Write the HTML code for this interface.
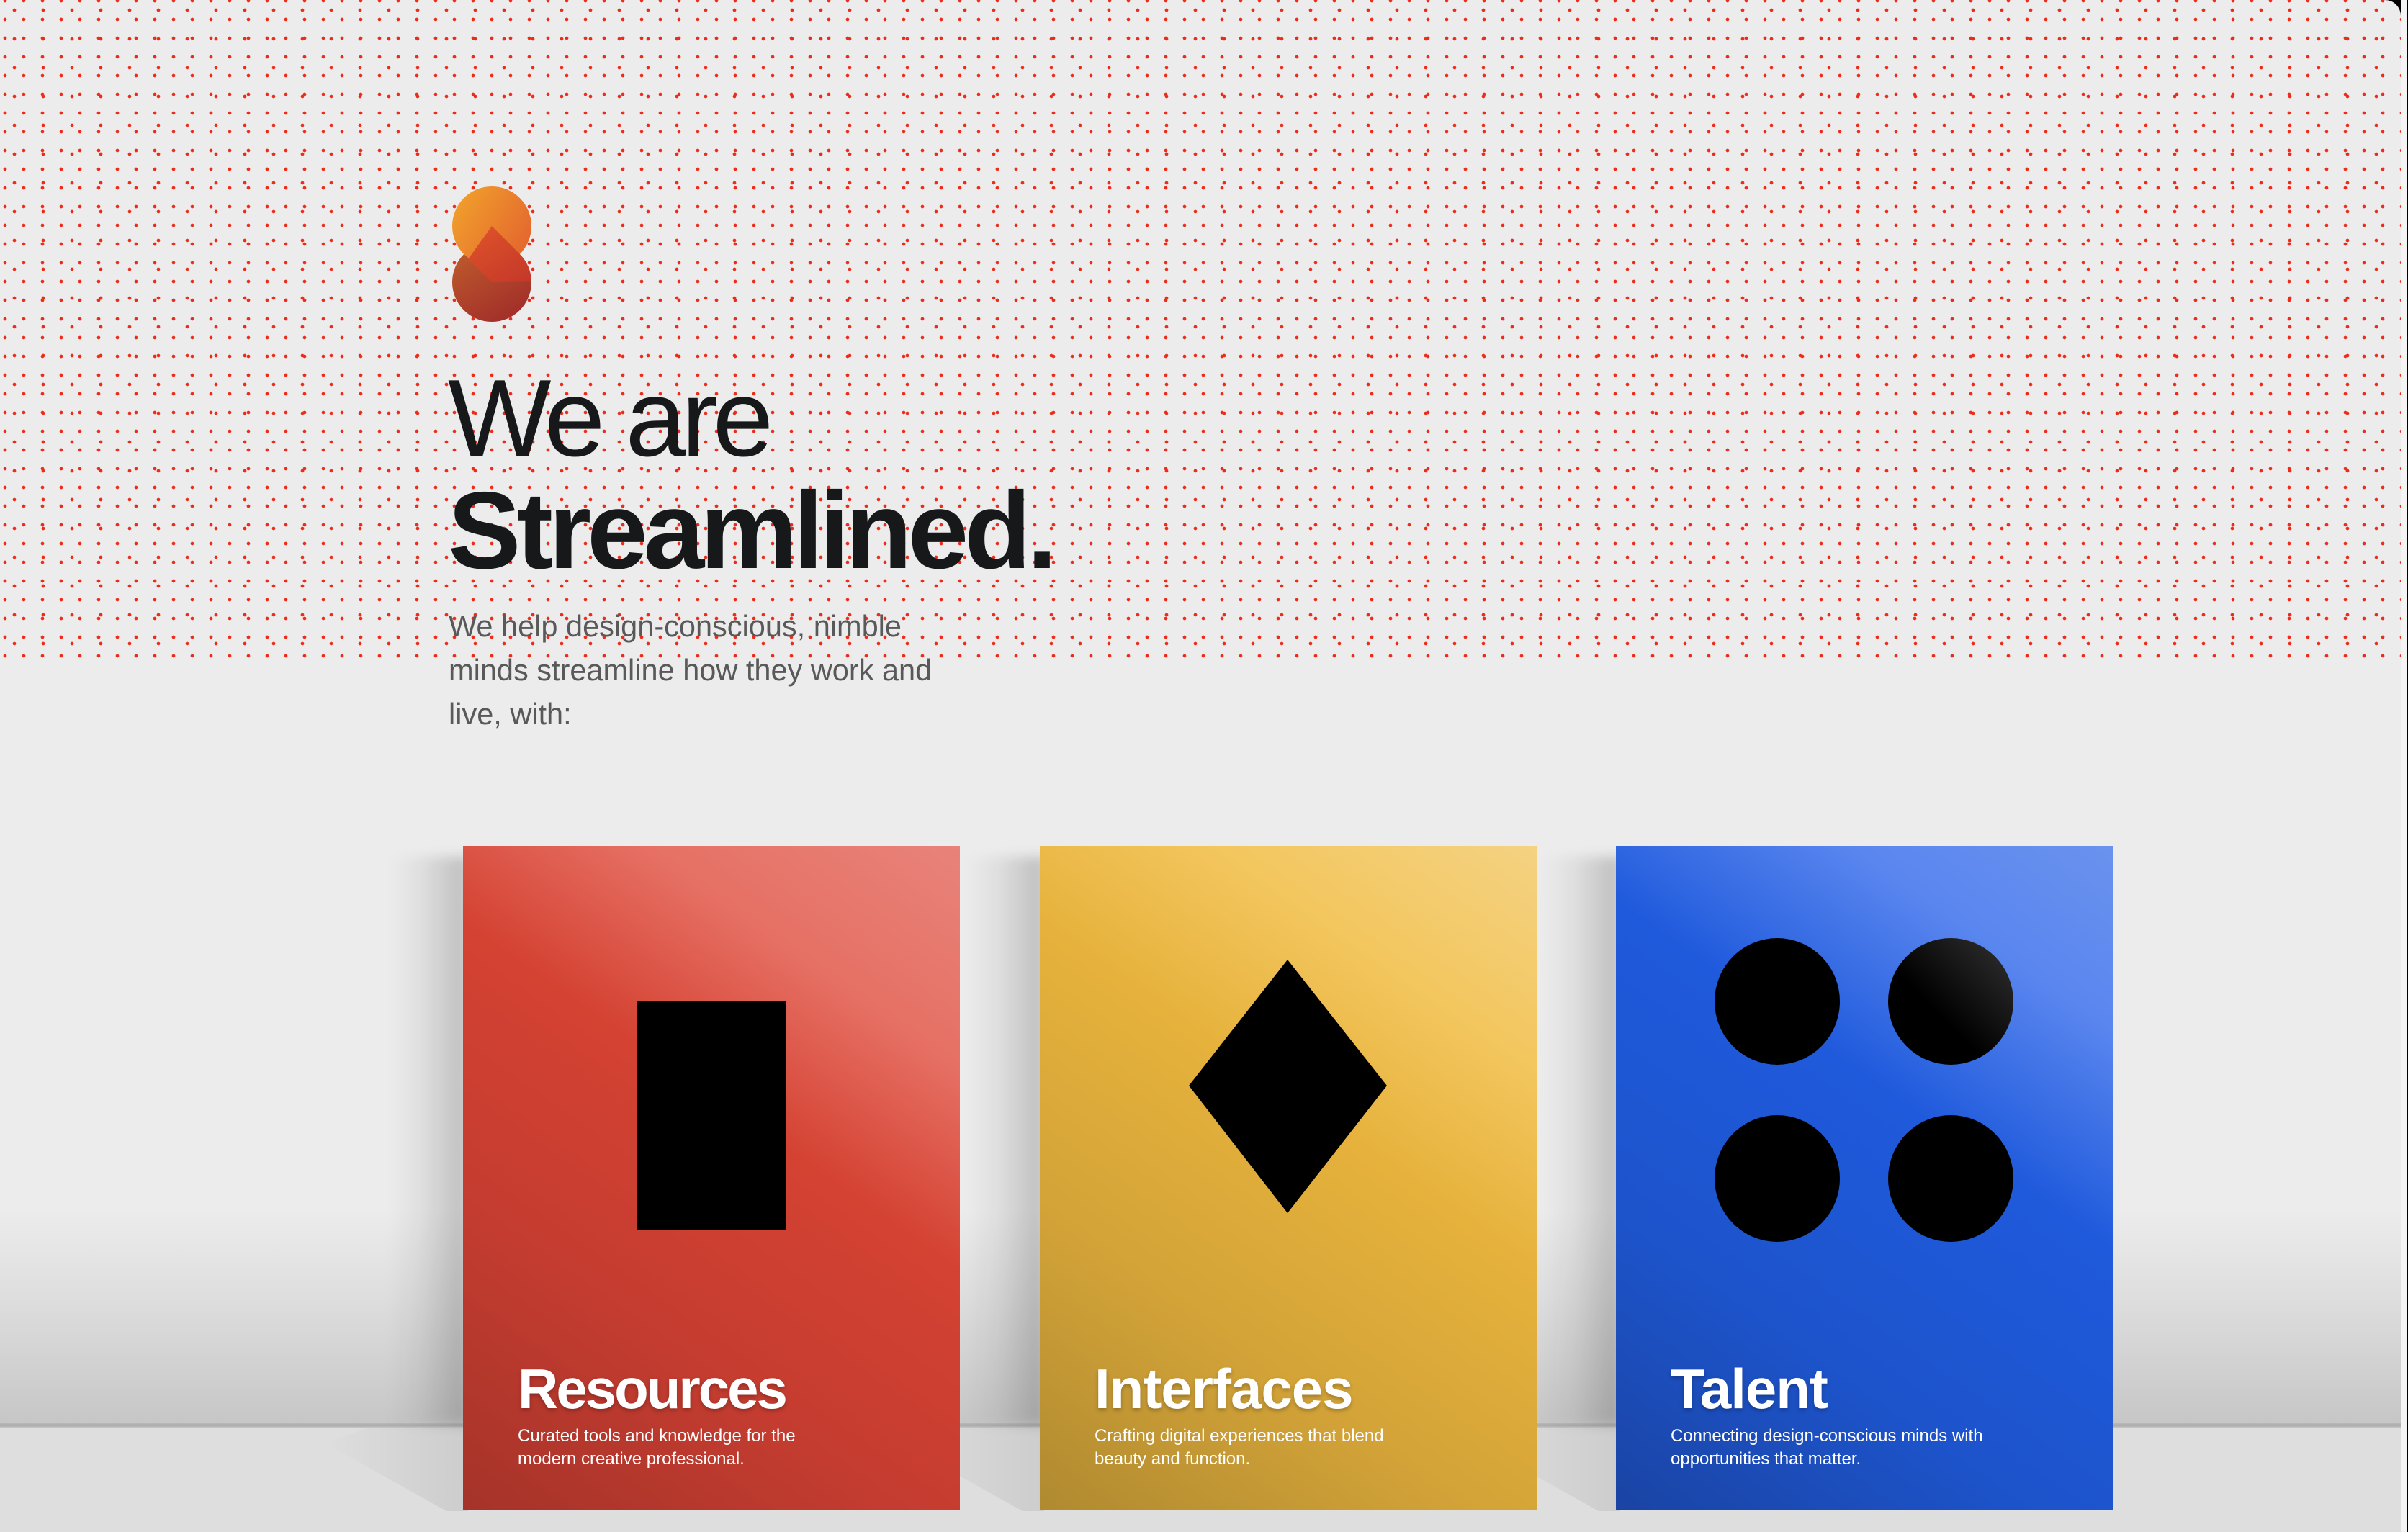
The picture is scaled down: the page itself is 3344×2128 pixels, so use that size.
<!DOCTYPE html>
<html><head><meta charset="utf-8"><style>
html,body{margin:0;padding:0}
body{width:3344px;height:2128px;overflow:hidden;background:#000;position:relative;font-family:"Liberation Sans",sans-serif}
.main{position:absolute;left:0;top:0;width:3334px;height:2128px;background:#ececec;border-top-right-radius:22px;overflow:hidden}
.strip{position:absolute;left:3334px;top:0;width:8px;height:2128px;background:#f4f4f4}
.dots{position:absolute;left:0;top:0;width:3334px;height:920px;
background-image:radial-gradient(circle at 13px 13px,#ee2a18 2.1px,transparent 2.6px),radial-gradient(circle at 20px 20px,#ee2a18 2.1px,transparent 2.6px);
background-size:26px 26px,40px 40px;background-position:-6px -12px,0px -6px}
.wall{position:absolute;left:0;top:1680px;width:3334px;height:300px;background:linear-gradient(#ececec,#dedede 40%,#c6c6c6)}
.line{position:absolute;left:0;top:1976px;width:3334px;height:8px;background:linear-gradient(#c0c0c0,#a9a9a9,#d0d0d0)}
.floor{position:absolute;left:0;top:1984px;width:3334px;height:144px;background:#dedede}
h1{position:absolute;left:622px;top:503px;margin:0;font-size:152px;line-height:156px;color:#17181a;font-weight:400;letter-spacing:-7px}
h1 b{font-weight:700;letter-spacing:-6px}
p.lead{position:absolute;left:623px;top:839px;margin:0;font-size:41.5px;line-height:61px;color:#595959}
.shadow{position:absolute;width:110px;height:790px;top:1190px;background:linear-gradient(90deg,rgba(0,0,0,0),rgba(0,0,0,.05) 40%,rgba(0,0,0,.2));filter:blur(8px)}
.fshadow{position:absolute;top:1984px;height:115px;width:200px;background:linear-gradient(90deg,rgba(0,0,0,0),rgba(0,0,0,.08));clip-path:polygon(60px 0,200px 0,200px 115px,170px 115px,0 20px);}
.card{position:absolute;top:1175px;width:690px;height:922px;overflow:hidden}
.red{left:643px;background:linear-gradient(215deg,#e8837a 0%,#e67064 22%,#d44232 42%,#c43c30 70%,#a53329 100%)}
.yel{left:1444px;background:linear-gradient(215deg,#f4d282 0%,#f3c65e 22%,#e6b23c 42%,#d3a338 70%,#b08a30 100%)}
.blu{left:2244px;background:linear-gradient(215deg,#6a92ee 0%,#5a86ef 18%,#1f5adc 40%,#1d54cc 70%,#1a44a4 100%)}
.card h2{position:absolute;left:76px;top:715px;margin:0;font-size:78px;line-height:78px;color:#fff;font-weight:700;letter-spacing:-1px;text-shadow:0 3px 6px rgba(0,0,0,.25)}
.card p{position:absolute;left:76px;top:804px;margin:0;font-size:24px;line-height:32px;color:#fff}
</style></head><body>
<div class="main">
<div class="dots"></div>
<div class="wall"></div><div class="line"></div><div class="floor"></div>
<svg style="position:absolute;left:620px;top:250px" width="130" height="210" viewBox="620 250 130 210">
<defs>
<linearGradient id="g1" x1="0" y1="0" x2="1" y2="0.6"><stop offset="0" stop-color="#f2a52c"/><stop offset="1" stop-color="#e4692e"/></linearGradient>
<linearGradient id="g2" x1="0" y1="0" x2="0.6" y2="1"><stop offset="0" stop-color="#c0602c"/><stop offset="1" stop-color="#a3302a"/></linearGradient>
<linearGradient id="g3" x1="0" y1="0" x2="1" y2="1"><stop offset="0" stop-color="#e0542a"/><stop offset="1" stop-color="#c0342a"/></linearGradient>
<clipPath id="cp"><circle cx="683" cy="314" r="55"/><circle cx="683" cy="392" r="55"/></clipPath>
</defs>
<circle cx="683" cy="392" r="55" fill="url(#g2)"/>
<circle cx="683" cy="314" r="55" fill="url(#g1)"/>
<polygon clip-path="url(#cp)" points="683,314 760,391 683,392 650,360" fill="url(#g3)"/>
</svg>
<h1>We are<br><b>Streamlined.</b></h1>
<p class="lead">We help design-conscious, nimble<br>minds streamline how they work and<br>live, with:</p>

<div class="shadow" style="left:540px"></div>
<div class="shadow" style="left:1341px"></div>
<div class="shadow" style="left:2141px"></div>
<div class="fshadow" style="left:450px"></div>
<div class="fshadow" style="left:1250px"></div>
<div class="fshadow" style="left:2050px"></div>

<div class="card red">
<div style="position:absolute;left:242px;top:216px;width:207px;height:317px;background:#000"></div>
<h2 style="letter-spacing:-3px">Resources</h2>
<p>Curated tools and knowledge for the<br>modern creative professional.</p>
</div>
<div class="card yel">
<svg style="position:absolute;left:0;top:0" width="690" height="922"><polygon points="344,158 482,333 344,510 207,333" fill="#000"/></svg>
<h2>Interfaces</h2>
<p>Crafting digital experiences that blend<br>beauty and function.</p>
</div>
<div class="card blu">
<svg style="position:absolute;left:0;top:0" width="690" height="922">
<defs><linearGradient id="cg" x1="1" y1="0" x2="0" y2="1"><stop offset="0" stop-color="#333"/><stop offset=".6" stop-color="#000"/></linearGradient></defs>
<ellipse cx="224" cy="216" rx="87" ry="88" fill="#000"/>
<ellipse cx="465" cy="216" rx="87" ry="88" fill="url(#cg)"/>
<ellipse cx="224" cy="462" rx="87" ry="88" fill="#000"/>
<ellipse cx="465" cy="462" rx="87" ry="88" fill="#000"/>
</svg>
<h2>Talent</h2>
<p>Connecting design-conscious minds with<br>opportunities that matter.</p>
</div>
</div>
<div class="strip"></div>
</body></html>
